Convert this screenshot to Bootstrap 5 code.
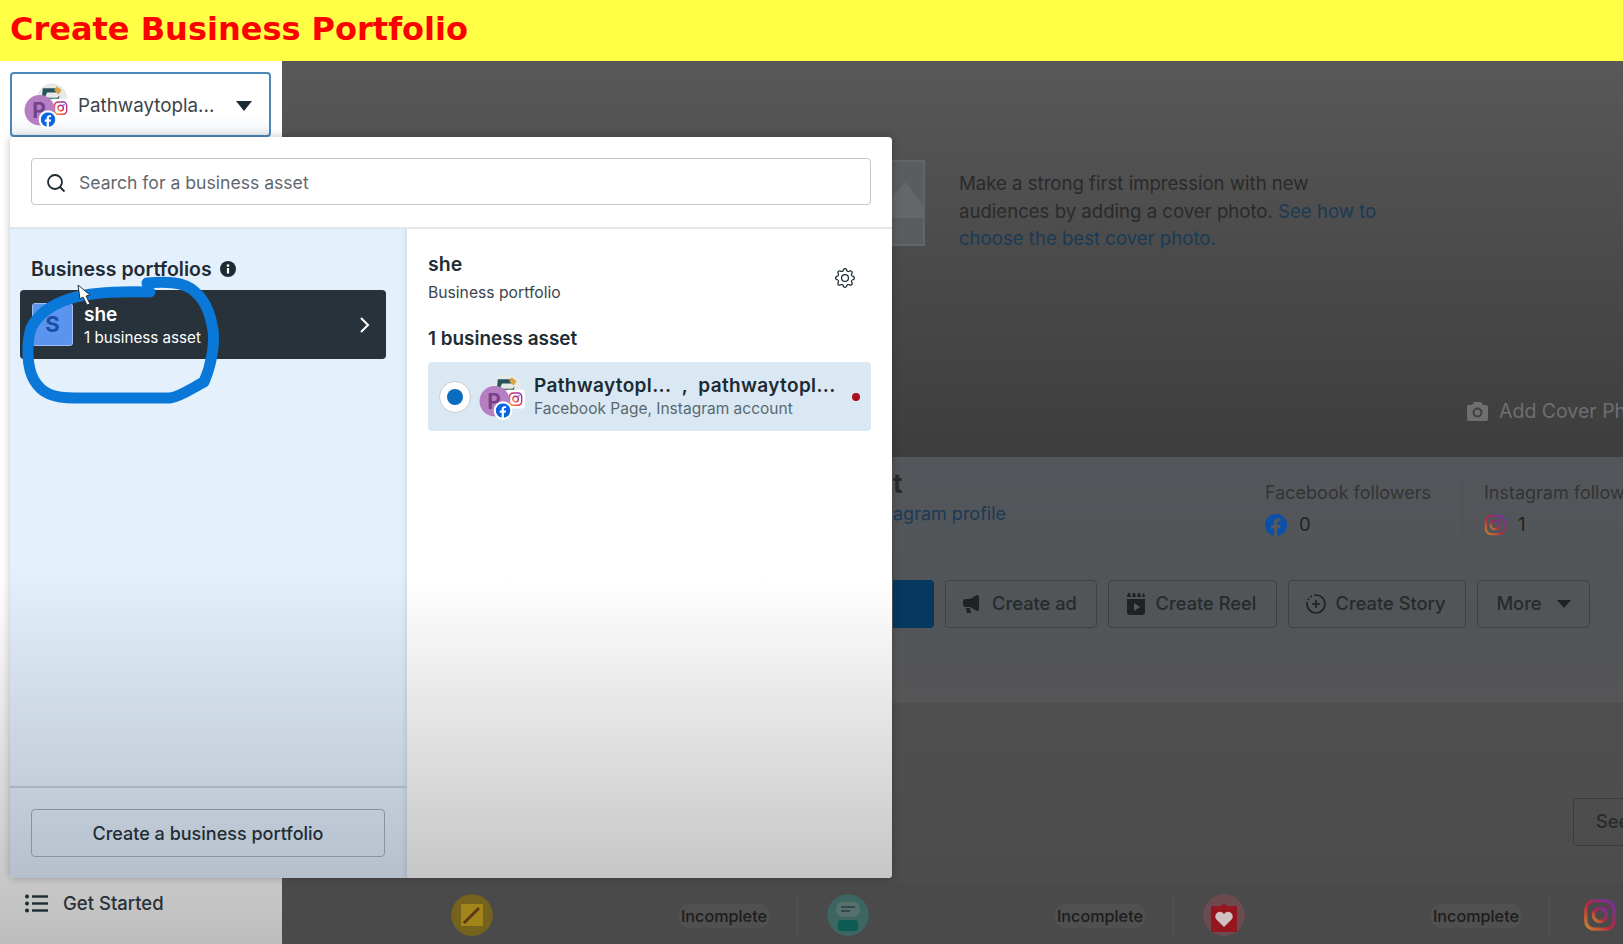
<!DOCTYPE html>
<html lang="en">
<head>
  <meta charset="UTF-8" />
  <meta name="viewport" content="width=device-width, initial-scale=1" />
  <title>Create Business Portfolio</title>
  <link href="https://cdn.jsdelivr.net/npm/bootstrap@5.3.6/dist/css/bootstrap.min.css" rel="stylesheet" />
  <style>
    html, body { height: 100%; margin: 0; overflow: hidden; }
    body { font-family: Inter, "Noto Sans", sans-serif; color: #1c2b33; position: relative; }
    .title-bar { height: 61px; background: #ffff46; color: #f00; font: 700 32px/59px "DejaVu Sans", sans-serif; padding-left: 10px; }
    .page-body { height: 883px; }

    /* left sidebar */
    .side-rail { width: 282px; background: linear-gradient(#fff 0, #fff 520px, #bdbdbd 883px); }
    .asset-select { margin: 11px 0 0 10px; width: 261px; height: 65px; border: 2px solid #4a88bb; border-radius: 4px; padding: 3px 17px 0 12px; background: linear-gradient(#fff 70%, #eef2f6); font-size: 18.8px; color: #3c4449; }
    .caret-down { width: 0; height: 0; border-left: 8px solid transparent; border-right: 8px solid transparent; border-top: 10px solid #1c2b33; }
    .rail-item { position: absolute; left: 25px; top: 890px; font-size: 18.5px; font-weight: 500; color: #283238; gap: 15px; }

    /* dimmed page behind the menu */
    .main-area { min-width: 0; overflow: hidden; color: #2a2a2a; }
    .hero-band { height: 396px; background: linear-gradient(#585858, #3d3d3d); padding: 99px 0 0 610px; position: relative; }
    .hero-thumb { width: 33px; height: 86px; border: 2px solid #626568; border-left: 0; background: #5a5c5e; flex: none; }
    .hero-copy { margin: 10px 0 0 34px; width: 440px; font-size: 18.6px; line-height: 27.5px; }
    .dim-link { color: #1a3a55; }
    .cover-link { position: absolute; left: 1185px; top: 336px; color: #6d6f71; font-size: 19.5px; white-space: nowrap; gap: 11px; }
    .info-band { height: 246px; background: linear-gradient(#53575b, #515558 60%, #565557); padding-left: 611px; }
    .info-top { height: 123px; }
    .lost-head { width: 372px; flex: none; }
    .lost-letter { font-size: 26px; font-weight: 700; line-height: 28px; margin-top: 13px; }
    .lost-link { font-size: 18px; line-height: 24px; margin-top: 4px; white-space: nowrap; }
    .stat-wrap { margin-top: 24px; }
    .stat-col { width: 176px; flex: none; }
    .stat-line { margin-top: 6px; }
    .stat-name { font-size: 18px; color: #333; line-height: 24px; white-space: nowrap; }
    .stat-num { font-size: 18.5px; color: #222; }
    .stat-rule { width: 1px; height: 60px; background: #4d5154; margin: 0 21px; }
    .dim-btn { height: 48px; border: 1px solid #3e4245; border-radius: 4px; background: transparent; color: #262a2d; font-size: 18.3px; font-weight: 500; padding: 0; display: flex; align-items: center; justify-content: center; gap: 10px; white-space: nowrap; flex: none; }
    .action-row { gap: 11px; }
    .dim-blue { width: 41px; background: #05385f; border: 0; border-radius: 0 4px 4px 0; }
    .act-ad { width: 152px; padding-right: 3px; }
    .act-reel { width: 169px; padding-right: 3px; }
    .act-story { width: 178px; padding-right: 3px; }
    .act-more { width: 113px; gap: 15px; }
    .dim-caret { width: 0; height: 0; border-left: 7px solid transparent; border-right: 7px solid transparent; border-top: 8px solid #1f2224; }
    .see-band { height: 180px; background: linear-gradient(#4f4f4f, #4c4c4c); padding: 95px 0 0 1291px; }
    .see-btn { width: 120px; justify-content: flex-start; padding-left: 22px; border-color: #3c3c3c; }
    .task-band { height: 61px; background: #4a4a4a; padding: 2px 0 0 141px; }
    .task-cell { width: 376px; flex: none; padding: 0 26px 0 28px; border-right: 3px solid #4c4e51; }
    .task-dot { width: 42px; height: 42px; border-radius: 50%; }
    .task-tag { font-size: 16.2px; font-weight: 500; color: #1d1d1d; background: #505050; border-radius: 12px; padding: 0 3px; margin-top: 3px; }
    .task-ig { margin-left: 32px; flex: none; }

    /* business asset menu */
    .asset-menu { position: absolute; left: 10px; top: 137px; width: 882px; height: 741px; border-radius: 4px; overflow: hidden; background: #fff; box-shadow: 0 0 8px rgba(0,0,0,.25); }
    .menu-search { height: 92px; padding: 21px; border-bottom: 2px solid #e4e6e8; }
    .search-box { height: 47px; border: 1px solid #c2c6c9; border-radius: 4px; padding: 3px 14px 0; gap: 13px; font-size: 17.6px; color: #5f686e; }
    .menu-columns { height: 649px; }
    .menu-left { width: 397px; background: linear-gradient(#e5f0fd 0, #e5f0fd 340px, #b5c0cc 100%); box-shadow: inset -5px 0 5px -4px rgba(0,0,0,.12); }
    .menu-right { width: 485px; padding: 23px 21px; background: linear-gradient(#fff 0, #fff 350px, #c6c6c6 100%); }
    .group-title { font-size: 19.5px; font-weight: 600; color: #1f2c34; line-height: 24px; }
    .list-head { padding: 28px 0 0 21px; }
    .count-title { font-size: 18.9px; margin-top: 22px; }
    .portfolio-row { margin: 9px 21px 0 10px; height: 69px; background: #27323b; border-radius: 4px; color: #fff; padding: 0 15px 0 12px; }
    .portfolio-tile { width: 41px; height: 43px; border-radius: 3px; background: #5a94ee; border: 1px solid #9dc0f5; color: #1b4fa8; font-size: 22px; font-weight: 700; margin-right: 11px; }
    .row-text { padding-top: 3px; }
    .row-name { font-size: 19px; font-weight: 600; line-height: 24px; }
    .row-sub { font-size: 15.2px; line-height: 22px; }
    .menu-foot { border-top: 2px solid #a9b4c0; height: 92px; padding: 21px 20px 0 21px; }
    .foot-btn { width: 354px; height: 48px; border: 1px solid #8a929b; border-radius: 4px; background: transparent; color: #1f2c34; font-size: 18px; font-weight: 500; }
    .plain-sub { font-size: 15.7px; color: #3a464d; line-height: 24px; margin-top: 5px; }
    .gear-icon { margin: 0 16px 2px 0; }
    .asset-row { height: 69px; background: #d9e8f3; border-radius: 4px; margin-top: 11px; padding: 0 11px; }
    .radio-mark { width: 32px; height: 32px; border-radius: 50%; background: #fff; border: 1px solid #c5cdd3; flex: none; margin-right: 8px; }
    .radio-mark i { width: 16px; height: 16px; border-radius: 50%; background: #0a6cbd; display: block; }
    .asset-copy { margin-left: 1px; }
    .asset-name { font-size: 19px; font-weight: 600; line-height: 24px; letter-spacing: .35px; white-space: nowrap; }
    .asset-sub { font-size: 15.5px; color: #5b6870; line-height: 22px; white-space: nowrap; }
    .alert-dot { width: 8px; height: 8px; border-radius: 50%; background: #a80d1a; margin-left: auto; }

    /* marker and pointer drawn over the menu */
    .pen-layer { position: absolute; left: 0; top: 0; pointer-events: none; }
  </style>
</head>
<body>
  <svg width="0" height="0" class="position-absolute">
    <defs>
      <linearGradient id="igGrad" x1="0" y1="1" x2="1" y2="0">
        <stop offset="0" stop-color="#f9a33a"/><stop offset=".45" stop-color="#e2304f"/><stop offset="1" stop-color="#7a3bc8"/>
      </linearGradient>
      <linearGradient id="igDim" x1="0" y1="1" x2="1" y2="0">
        <stop offset="0" stop-color="#c98a2e"/><stop offset=".45" stop-color="#b42840"/><stop offset="1" stop-color="#6a33ac"/>
      </linearGradient>
      <symbol id="fbGlyph" viewBox="0 0 24 24">
        <circle cx="12" cy="12" r="12" fill="#0a66e0"/>
        <path fill="#fff" d="M16.400 15.500l.5-3.500h-3.400V9.800c0-1 .5-1.900 2-1.900h1.500v-3s-1.400-.2-2.700-.2c-2.800 0-4.600 1.700-4.600 4.700V12H6.600v3.500h3.100V24h3.800v-8.500z"/>
      </symbol>
      <symbol id="fbDim" viewBox="0 0 24 24">
        <circle cx="12" cy="12" r="12" fill="#0a4fa8"/>
        <path fill="#56595c" d="M16.400 15.500l.5-3.500h-3.400V9.800c0-1 .5-1.900 2-1.900h1.500v-3s-1.400-.2-2.700-.2c-2.800 0-4.600 1.700-4.600 4.700V12H6.600v3.500h3.100V24h3.800v-8.500z"/>
      </symbol>
      <symbol id="igGlyph" viewBox="0 0 24 24">
        <rect x="2" y="2" width="20" height="20" rx="6" fill="none" stroke="url(#igGrad)" stroke-width="2.400"/>
        <circle cx="12" cy="12" r="4.600" fill="none" stroke="url(#igGrad)" stroke-width="2.400"/>
        <circle cx="17.500" cy="6.500" r="1.400" fill="#c22f8a"/>
      </symbol>
      <symbol id="igShade" viewBox="0 0 24 24">
        <rect x="2" y="2" width="20" height="20" rx="6" fill="none" stroke="url(#igDim)" stroke-width="2.400"/>
        <circle cx="12" cy="12" r="4.600" fill="none" stroke="url(#igDim)" stroke-width="2.400"/>
        <circle cx="17.500" cy="6.500" r="1.400" fill="#8a2462"/>
      </symbol>
      <symbol id="pageStack" viewBox="0 0 44 44">
        <circle cx="27" cy="15" r="14.500" fill="#e6e9e6"/>
        <path d="M18 5h16l-3 4H22l-2 5h12l2-2-2 9H18l3-4h8l1-2H17z" fill="#27535e"/>
        <path d="M31 3l5 4-3 4-4-4z" fill="#d9a441"/>
        <rect x="26" y="15" width="18" height="18" rx="3" fill="#fff"/>
        <use href="#igGlyph" x="28" y="17" width="14" height="14"/>
        <circle cx="15" cy="26" r="14.500" fill="#b67fc4"/>
        <text x="8" y="33" font-family="Inter, sans-serif" font-size="20" font-weight="700" fill="#75428a">P</text>
        <circle cx="23" cy="35" r="9" fill="#fff"/>
        <use href="#fbGlyph" x="16" y="28" width="14" height="14"/>
      </symbol>
    </defs>
  </svg>

  <div class="title-bar">Create Business Portfolio</div>

  <div class="page-body d-flex">
    <aside class="side-rail flex-shrink-0">
      <div class="asset-select d-flex align-items-center">
        <svg width="46" height="46" class="me-2 flex-shrink-0"><use href="#pageStack"/></svg>
        <span class="flex-grow-1">Pathwaytopla...</span>
        <span class="caret-down"></span>
      </div>
    </aside>

    <main class="main-area flex-grow-1">
      <section class="hero-band d-flex align-items-start">
        <div class="hero-thumb">
          <svg width="31" height="82" viewBox="0 0 31 82" class="d-block"><path d="M0 34L14 20l17 24v12H0z" fill="#646668"/></svg>
        </div>
        <p class="hero-copy mb-0">Make a strong first impression with new audiences by adding a cover photo. <span class="dim-link">See how to choose the best cover photo.</span></p>
        <div class="cover-link d-flex align-items-center">
          <svg width="21" height="19" viewBox="0 0 21 19"><path fill="#6d6f71" d="M7 0h7l2 3h3a2 2 0 0 1 2 2v12a2 2 0 0 1-2 2H2a2 2 0 0 1-2-2V5a2 2 0 0 1 2-2h3z"/><circle cx="10.500" cy="10.500" r="4" fill="none" stroke="#3f3f3f" stroke-width="2"/></svg>
          <span>Add Cover Photo</span>
        </div>
      </section>

      <section class="info-band">
        <div class="info-top d-flex">
          <div class="lost-head">
            <div class="lost-letter">t</div>
            <div class="dim-link lost-link">agram profile</div>
          </div>
          <div class="d-flex flex-shrink-0 stat-wrap align-items-start">
            <div class="stat-col">
              <div class="stat-name">Facebook followers</div>
              <div class="d-flex align-items-center gap-2 stat-line">
                <svg width="22" height="22"><use href="#fbDim"/></svg><span class="stat-num ms-1">0</span>
              </div>
            </div>
            <div class="stat-rule"></div>
            <div>
              <div class="stat-name">Instagram followers</div>
              <div class="d-flex align-items-center gap-2 stat-line">
                <svg width="22" height="22"><use href="#igShade"/></svg><span class="stat-num ms-1">1</span>
              </div>
            </div>
          </div>
        </div>
        <div class="d-flex action-row">
          <button class="btn dim-btn dim-blue" type="button" aria-label="Promote"></button>
          <button class="btn dim-btn act-ad" type="button">
            <svg width="20" height="20" viewBox="0 0 20 20"><path fill="#1f2224" d="M15 1l2 1v14l-2 1-7-4H4a3 3 0 0 1-3-3V8a3 3 0 0 1 3-3h4zM4 14h4l1 5H5z"/></svg>Create ad
          </button>
          <button class="btn dim-btn act-reel" type="button">
            <svg width="20" height="22" viewBox="0 0 20 22"><path fill="#1f2224" d="M1 6h18v13a3 3 0 0 1-3 3H4a3 3 0 0 1-3-3zM2 0h2l1 4H1zM7 0h2l1 4H6zM12 0h2l1 4h-4zM17 0h1l1 4h-3z"/><path fill="#55595b" d="M8 10l6 4-6 4z"/></svg>Create Reel
          </button>
          <button class="btn dim-btn act-story" type="button">
            <svg width="20" height="20" viewBox="0 0 20 20" fill="none" stroke="#1f2224" stroke-width="1.700"><path d="M10 1a9 9 0 0 1 0 18a9 9 0 0 1-9-9" /><path stroke-dasharray="2 2" d="M1 10a9 9 0 0 1 9-9"/><path d="M10 6v8M6 10h8"/></svg>Create Story
          </button>
          <button class="btn dim-btn act-more" type="button">More <span class="dim-caret"></span></button>
        </div>
      </section>

      <section class="see-band">
        <button class="btn dim-btn see-btn" type="button">See</button>
      </section>

      <section class="task-band d-flex align-items-center">
        <div class="task-cell d-flex align-items-center justify-content-between">
          <svg class="task-dot" viewBox="0 0 42 42"><circle cx="21" cy="21" r="21" fill="#75621c"/><rect x="10" y="10" width="22" height="22" fill="#a3841a"/><path d="M13 29l15-15" stroke="#5a3b14" stroke-width="3"/></svg>
          <span class="task-tag">Incomplete</span>
        </div>
        <div class="task-cell d-flex align-items-center justify-content-between">
          <svg class="task-dot" viewBox="0 0 42 42"><circle cx="21" cy="21" r="21" fill="#3d6662"/><rect x="9" y="8" width="24" height="15" rx="7" fill="#56706c"/><path d="M14 13h14M14 17h9" stroke="#2c3d3d" stroke-width="1.500"/><rect x="11" y="26" width="20" height="11" rx="3" fill="#0d5b55"/></svg>
          <span class="task-tag">Incomplete</span>
        </div>
        <div class="task-cell d-flex align-items-center justify-content-between">
          <svg class="task-dot" viewBox="0 0 42 42"><circle cx="21" cy="21" r="21" fill="#6b4a50"/><path fill="#96161f" d="M8 12h10l3-3 3 3h10v26H8z"/><path fill="#cfc2c2" d="M21 33l-8-8a4.500 4.500 0 0 1 8-5 4.500 4.500 0 0 1 8 5z"/></svg>
          <span class="task-tag">Incomplete</span>
        </div>
        <svg class="task-ig" width="34" height="36"><use href="#igShade"/></svg>
      </section>
    </main>
  </div>

  <div class="rail-item d-flex align-items-center">
    <svg width="23" height="19" viewBox="0 0 23 19" fill="#1c2b33"><circle cx="2" cy="2.500" r="2"/><circle cx="2" cy="9.500" r="2"/><circle cx="2" cy="16.500" r="2"/><rect x="7" y="1.300" width="16" height="2.400"/><rect x="7" y="8.300" width="16" height="2.400"/><rect x="7" y="15.300" width="16" height="2.400"/></svg>
    <span>Get Started</span>
  </div>

  <div class="asset-menu">
    <div class="menu-search">
      <div class="search-box d-flex align-items-center">
        <svg width="20" height="20" viewBox="0 0 20 20" fill="none" stroke="#1c2b33" stroke-width="1.800"><circle cx="9" cy="9" r="7"/><path d="M14 14l4.500 4.500"/></svg>
        <span>Search for a business asset</span>
      </div>
    </div>
    <div class="menu-columns d-flex">
      <div class="menu-left d-flex flex-column">
        <div class="flex-grow-1">
          <div class="group-title d-flex align-items-center gap-2 list-head">Business portfolios
            <svg width="16" height="16" viewBox="0 0 16 16"><circle cx="8" cy="8" r="8" fill="#1c2b33"/><rect x="6.900" y="7" width="2.200" height="5.500" fill="#fff"/><circle cx="8" cy="4.600" r="1.300" fill="#fff"/></svg>
          </div>
          <div class="portfolio-row d-flex align-items-center">
            <div class="portfolio-tile d-flex align-items-center justify-content-center">S</div>
            <div class="flex-grow-1 row-text">
              <div class="row-name">she</div>
              <div class="row-sub">1 business asset</div>
            </div>
            <svg width="12" height="18" viewBox="0 0 12 18" fill="none" stroke="#fff" stroke-width="2"><path d="M2 2l7 7-7 7"/></svg>
          </div>
        </div>
        <div class="menu-foot">
          <button class="btn foot-btn" type="button">Create a business portfolio</button>
        </div>
      </div>
      <div class="menu-right">
        <div class="d-flex justify-content-between align-items-center">
          <div>
            <div class="group-title">she</div>
            <div class="plain-sub">Business portfolio</div>
          </div>
          <svg class="gear-icon" width="20" height="20" viewBox="0 0 16 16" fill="#1c2b33"><path d="M8 4.754a3.246 3.246 0 1 0 0 6.492 3.246 3.246 0 0 0 0-6.492zM5.754 8a2.246 2.246 0 1 1 4.492 0 2.246 2.246 0 0 1-4.492 0z"/><path d="M9.796 1.343c-.527-1.790-3.065-1.790-3.592 0l-.094.319a.873.873 0 0 1-1.255.52l-.292-.16c-1.640-.892-3.433.902-2.540 2.541l.159.292a.873.873 0 0 1-.52 1.255l-.319.094c-1.790.527-1.790 3.065 0 3.592l.319.094a.873.873 0 0 1 .52 1.255l-.16.292c-.892 1.640.901 3.434 2.541 2.540l.292-.159a.873.873 0 0 1 1.255.52l.094.319c.527 1.790 3.065 1.790 3.592 0l.094-.319a.873.873 0 0 1 1.255-.52l.292.16c1.640.893 3.434-.902 2.540-2.541l-.159-.292a.873.873 0 0 1 .52-1.255l.319-.094c1.790-.527 1.790-3.065 0-3.592l-.319-.094a.873.873 0 0 1-.52-1.255l.16-.292c.893-1.640-.902-3.433-2.541-2.540l-.292.159a.873.873 0 0 1-1.255-.52l-.094-.319zm-2.633.283c.246-.835 1.428-.835 1.674 0l.094.319a1.873 1.873 0 0 0 2.693 1.115l.291-.16c.764-.415 1.600.42 1.184 1.185l-.159.292a1.873 1.873 0 0 0 1.116 2.692l.318.094c.835.246.835 1.428 0 1.674l-.319.094a1.873 1.873 0 0 0-1.115 2.693l.16.291c.415.764-.42 1.600-1.185 1.184l-.291-.159a1.873 1.873 0 0 0-2.693 1.116l-.094.318c-.246.835-1.428.835-1.674 0l-.094-.319a1.873 1.873 0 0 0-2.692-1.115l-.292.16c-.764.415-1.600-.42-1.184-1.185l.159-.291A1.873 1.873 0 0 0 1.945 8.930l-.319-.094c-.835-.246-.835-1.428 0-1.674l.319-.094A1.873 1.873 0 0 0 3.060 4.377l-.16-.292c-.415-.764.42-1.600 1.185-1.184l.292.159a1.873 1.873 0 0 0 2.692-1.115l.094-.319z"/></svg>
        </div>
        <div class="group-title count-title">1 business asset</div>
        <div class="asset-row d-flex align-items-center">
          <div class="radio-mark d-flex align-items-center justify-content-center"><i></i></div>
          <svg width="46" height="46" class="flex-shrink-0 me-2"><use href="#pageStack"/></svg>
          <div class="asset-copy">
            <div class="asset-name">Pathwaytopl...&nbsp; ,&nbsp; pathwaytopl...</div>
            <div class="asset-sub">Facebook Page, Instagram account</div>
          </div>
          <span class="alert-dot"></span>
        </div>
      </div>
    </div>
  </div>

  <svg class="pen-layer" width="1623" height="944">
    <path d="M150 292C120 291 92 292 72 298C52 304 38 314 31 328C26 345 27 368 34 380C42 394 54 398 75 398L170 398C180 397 192 388 204 382C211 366 215 345 213 330C210 312 205 300 194 291C184 282 168 281 147 283" fill="none" stroke="#0a78d8" stroke-width="11" stroke-linecap="round" stroke-linejoin="round"/>
    <path d="M78 285l2 14 3-2 4 8 3-1-4-8 4-1z" fill="#fff" stroke="#27323b" stroke-width="1"/>
  </svg>
</body>
</html>
